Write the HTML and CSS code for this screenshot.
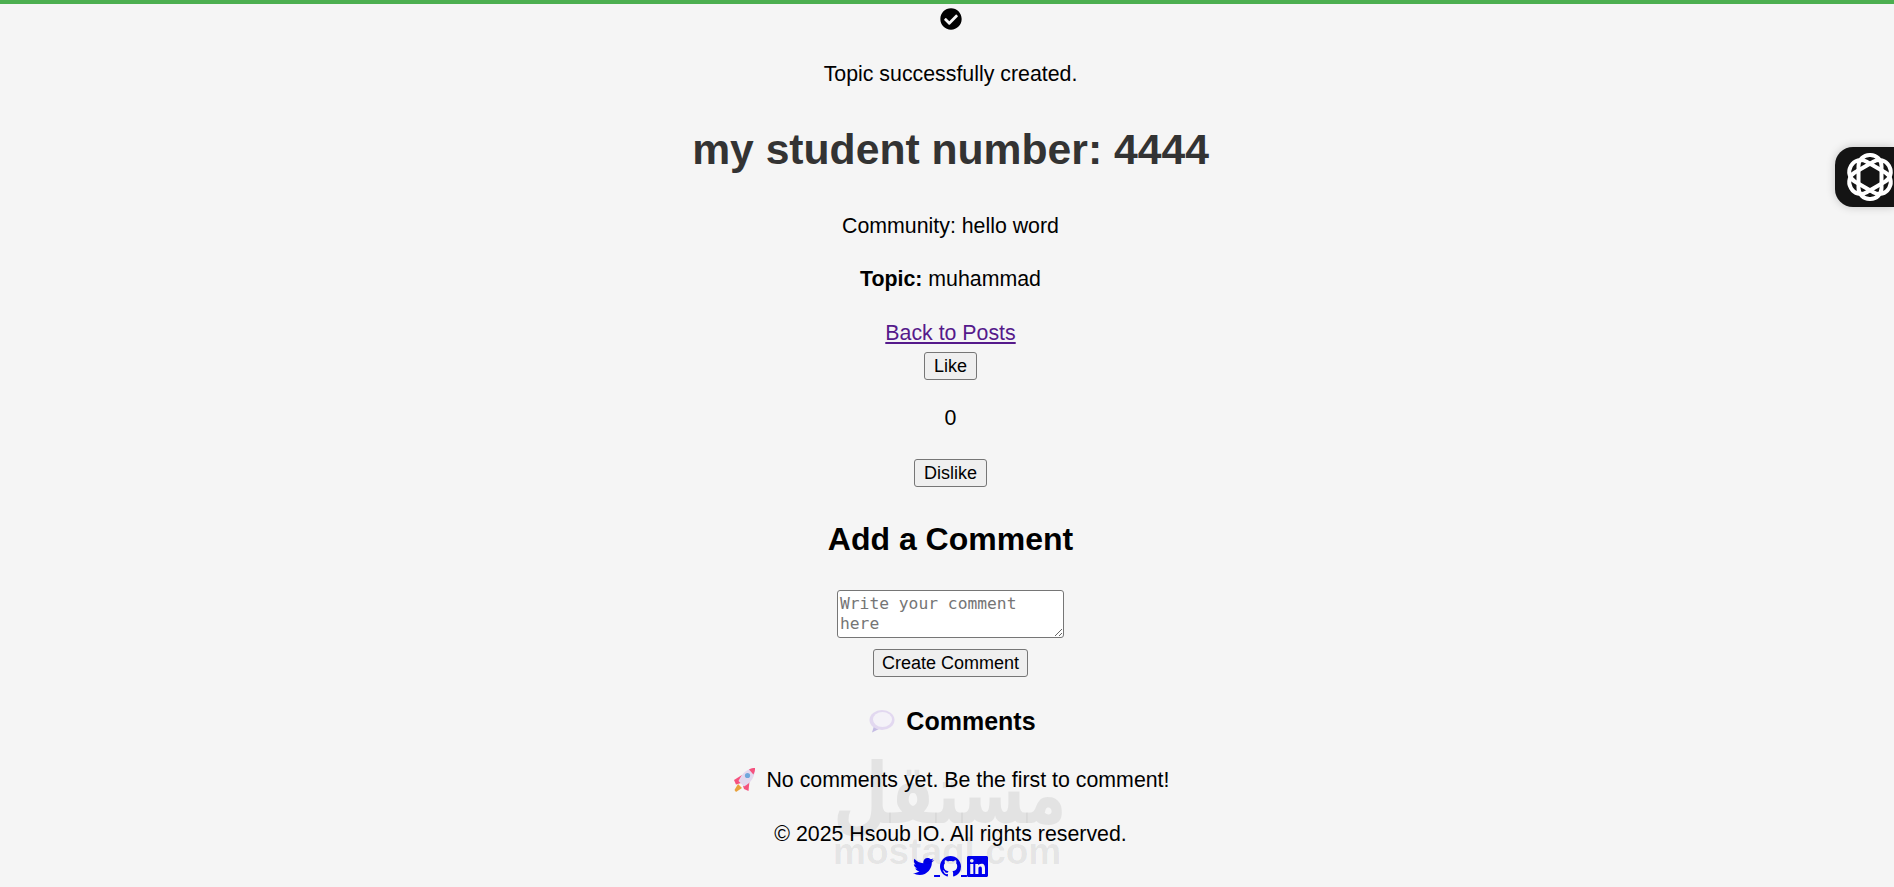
FILE: index.html
```html
<!DOCTYPE html>
<html lang="en">
<head>
    <meta charset="UTF-8" />
    <title>Topic</title>
    <link rel="stylesheet" href="styles.css">
</head>
<body>
    <div class="flash">
        <svg class="flash-icon" viewBox="0 0 512 512"><path d="M504 256c0 136.967-111.033 248-248 248S8 392.967 8 256 119.033 8 256 8s248 111.033 248 248zM227.314 387.314l184-184c6.248-6.248 6.248-16.379 0-22.627l-22.627-22.627c-6.248-6.249-16.379-6.25-22.628 0L216 308.118l-70.059-70.059c-6.248-6.248-16.379-6.248-22.628 0l-22.627 22.627c-6.248 6.248-6.248 16.379 0 22.627l104 104c6.249 6.249 16.379 6.249 22.628-.001z"/></svg>
    </div>

    <div class="page">
        <p class="flash-text">Topic successfully created.</p>
        <h1>my student number: 4444</h1>
        <p>Community: hello word</p>
        <p><strong>Topic:</strong> muhammad</p>
        <a class="back-link" href="#">Back to Posts</a>

        <div class="votes">
            <button class="btn">Like</button>
            <p>0</p>
            <button class="btn">Dislike</button>
        </div>

        <h2>Add a Comment</h2>
        <form class="comment-form">
            <textarea placeholder="Write your comment here"></textarea>
            <button class="btn">Create Comment</button>
        </form>

        <h3 class="comments-title">
            <svg class="emoji bubble" viewBox="9 6 26 26">
                <path d="M14 24 L12 30.5 L19 27 Z" fill="#c4bce4"/>
                <ellipse cx="22" cy="18" rx="12.5" ry="10" fill="#e2d8f0"/>
                <ellipse cx="22.5" cy="17.5" rx="9.5" ry="7.5" fill="#f4f2f8"/>
            </svg>
            Comments
        </h3>
        <p class="no-comments">
            <svg class="emoji rocket" viewBox="9 9 24 24">
                <path d="M14 25 L18 29 L12 33 L10.5 31 Z" fill="#e8a23c"/>
                <path d="M18 16 L10 21 L12 25.5 L17 24 Z" fill="#f5527e"/>
                <path d="M25.5 22 L24.5 32 L20 30 L19 27 Z" fill="#f5527e"/>
                <path d="M31 9 C24 9 18 14 14.5 22 L20 27.5 C27 24 31.5 17 31 9 Z" fill="#e3d8ee"/>
                <path d="M31 9 C29 9 27 9.4 25 10.5 L29.4 15.5 C30.6 13.2 31.2 11 31 9 Z" fill="#f5527e"/>
                <circle cx="23.5" cy="16.5" r="2.6" fill="#6fa8dc"/>
            </svg>
            No comments yet. Be the first to comment!
        </p>

        <footer>
            <p>&copy; 2025 Hsoub IO. All rights reserved.</p>
            <div class="social"><a href="#"><svg viewBox="0 0 512 512"><path d="M459.37 151.716c.325 4.548.325 9.097.325 13.645 0 138.72-105.583 298.558-298.558 298.558-59.452 0-114.68-17.219-161.137-47.106 8.447.974 16.568 1.299 25.34 1.299 49.055 0 94.213-16.568 130.274-44.832-46.132-.975-84.792-31.188-98.112-72.772 6.498.974 12.995 1.624 19.818 1.624 9.421 0 18.843-1.3 27.614-3.573-48.081-9.747-84.143-51.98-84.143-102.985v-1.299c13.969 7.797 30.214 12.67 47.431 13.319-28.264-18.843-46.781-51.005-46.781-87.391 0-19.492 5.197-37.36 14.294-52.954 51.655 63.675 129.3 105.258 216.365 109.807-1.624-7.797-2.599-15.918-2.599-24.04 0-57.828 46.782-104.934 104.934-104.934 30.213 0 57.502 12.67 76.67 33.137 23.715-4.548 46.456-13.32 66.599-25.34-7.798 24.366-24.366 44.833-46.132 57.827 21.117-2.273 41.584-8.122 60.426-16.243-14.292 20.791-32.161 39.308-52.628 54.253z"/></svg> </a><a href="#"><svg viewBox="0 0 16 16"><path d="M8 0C3.58 0 0 3.58 0 8c0 3.54 2.29 6.53 5.47 7.59.4.07.55-.17.55-.38 0-.19-.01-.82-.01-1.49-2.01.37-2.53-.49-2.69-.94-.09-.23-.48-.94-.82-1.13-.28-.15-.68-.52-.01-.53.63-.01 1.08.58 1.23.82.72 1.21 1.87.87 2.33.66.07-.52.28-.87.51-1.07-1.78-.2-3.64-.89-3.64-3.95 0-.87.31-1.59.82-2.15-.08-.2-.36-1.02.08-2.12 0 0 .67-.21 2.2.82.64-.18 1.32-.27 2-.27.68 0 1.36.09 2 .27 1.53-1.04 2.2-.82 2.2-.82.44 1.1.16 1.92.08 2.12.51.56.82 1.27.82 2.15 0 3.07-1.87 3.75-3.65 3.95.29.25.54.73.54 1.48 0 1.07-.01 1.93-.01 2.2 0 .21.15.46.55.38A8.013 8.013 0 0016 8c0-4.42-3.58-8-8-8z"/></svg> </a><a href="#"><svg viewBox="0 32 448 448"><path d="M416 32H31.9C14.3 32 0 46.5 0 64.3v383.4C0 465.5 14.3 480 31.9 480H416c17.6 0 32-14.5 32-32.3V64.3c0-17.8-14.4-32.3-32-32.3zM135.4 416H69V202.2h66.5V416zm-33.2-243c-21.3 0-38.5-17.3-38.5-38.5S80.9 96 102.2 96c21.2 0 38.5 17.3 38.5 38.5 0 21.3-17.2 38.5-38.5 38.5zm282.1 243h-66.4V312c0-24.8-.5-56.7-34.5-56.7-34.6 0-39.9 27-39.9 54.9V416h-66.4V202.2h63.7v29.2h.9c8.9-16.8 30.6-34.5 62.9-34.5 67.2 0 79.7 44.3 79.7 101.9V416z"/></svg></a></div>
        </footer>
    </div>

    <div class="watermark">
        <div class="watermark-ar">مستقل</div>
        <div class="watermark-en">mostaql.com</div>
    </div>

    <div class="side-tab">
        <svg viewBox="0 0 48 48">
            <rect x="2" y="12.5" width="44" height="23" rx="11" transform="rotate(90 24 24)"/>
            <rect x="2" y="12.5" width="44" height="23" rx="11" transform="rotate(30 24 24)"/>
            <rect x="2" y="12.5" width="44" height="23" rx="11" transform="rotate(150 24 24)"/>
        </svg>
    </div>
</body>
</html>
```

FILE: styles.css
```css
body {
    margin: 0;
    height: 887px;
    overflow: hidden;
    background-color: #f5f5f5;
    color: #000000;
    font-family: "Liberation Sans", Arial, sans-serif;
    font-size: 21.33px;
    line-height: 32px;
    text-align: center;
}

p {
    margin: 21px 0;
}

a {
    color: #551a8b;
}

.flash {
    border-top: 4px solid #4caf50;
    padding: 4px 0 0 7px;
}

.flash-icon {
    display: block;
    width: 22px;
    height: 22px;
    margin: 0 auto;
}

.page {
    padding-left: 7px;
}

.flash-text {
    margin: 28px 0 32px;
}

h1 {
    margin: 34px 0 35px;
    color: #333333;
    font-size: 42.67px;
    line-height: 51px;
}

.back-link {
    display: block;
    margin-top: 22px;
    line-height: 32px;
}

h2 {
    margin: 34px 0 32px;
    font-size: 32px;
    line-height: 37px;
}

h3 {
    margin: 29px 0 28px;
    font-size: 25px;
    line-height: 30px;
}

.btn {
    display: block;
    height: 28px;
    margin: 0 auto;
    padding: 0 9px;
    font-family: inherit;
    font-size: 18px;
    line-height: 24px;
    border: 1px solid #767676;
    border-radius: 3px;
    background-color: #efefef;
    color: #000000;
}

.votes {
    margin-top: 3px;
}

.votes p {
    margin: 22px 0 25px;
}

.comment-form textarea {
    display: block;
    box-sizing: border-box;
    width: 227px;
    height: 48px;
    margin: 0 auto 11px;
    padding: 3px 2px 1px;
    font-family: "DejaVu Sans Mono", monospace;
    font-size: 16.3px;
    line-height: 20px;
    border: 1px solid #767676;
    border-radius: 3px;
    background: #ffffff;
}

.comment-form .btn {
    padding: 0 8px;
}

.emoji {
    vertical-align: middle;
}

.bubble {
    width: 26px;
    height: 26px;
    margin: -4px 4px 0 4px;
}

.rocket {
    width: 24px;
    height: 24px;
    margin: -3px 4px 0 1px;
}

footer p {
    margin: 22px 0 0;
}

.social {
    margin-top: 6px;
    line-height: 21px;
}

.social a {
    color: #0000ee;
}

.social svg {
    width: 21px;
    height: 21px;
    fill: #0000ee;
    vertical-align: bottom;
}

.watermark {
    position: absolute;
    top: 752px;
    left: 833px;
    width: 227px;
    color: rgba(0, 0, 0, 0.07);
    font-weight: bold;
    line-height: 1;
    pointer-events: none;
    text-align: left;
    white-space: nowrap;
}

.watermark-ar {
    font-family: "DejaVu Sans", sans-serif;
    font-size: 84px;
    transform: scaleX(0.76);
    transform-origin: left;
}

.watermark-en {
    margin-top: -3px;
    font-size: 37px;
}

.side-tab {
    position: absolute;
    top: 147px;
    right: 0;
    width: 59px;
    height: 60px;
    overflow: hidden;
    background-color: #141414;
    border-radius: 18px 0 0 18px;
    box-shadow: 0 0 10px rgba(0, 0, 0, 0.2);
}

.side-tab svg {
    display: block;
    width: 48px;
    height: 48px;
    margin: 6px 0 0 11px;
    fill: none;
    stroke: #ffffff;
    stroke-width: 4;
}
```
